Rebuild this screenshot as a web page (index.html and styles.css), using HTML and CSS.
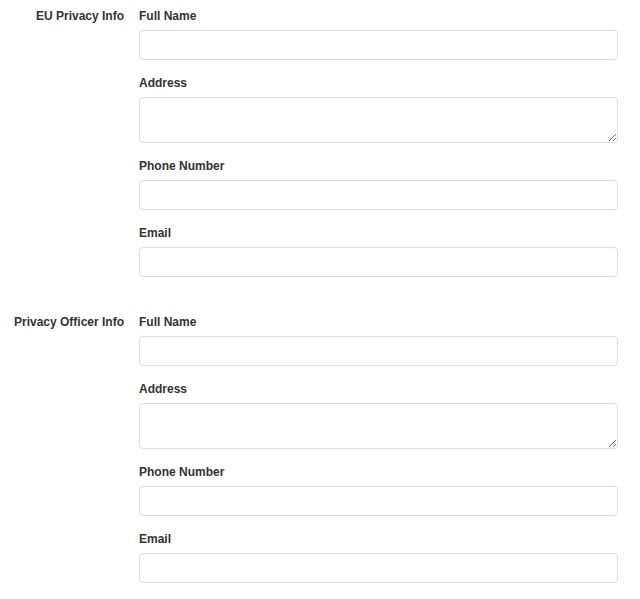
FILE: index.html
```html
<!DOCTYPE html>
<html>
<head>
<meta charset="utf-8">
<link rel="stylesheet" href="styles.css">
</head>
<body>
<form class="form">
  <section class="group">
    <div class="group-label">EU Privacy Info</div>
    <div class="fields">
      <div class="field">
        <label class="field-label">Full Name</label>
        <input class="control" type="text">
      </div>
      <div class="field">
        <label class="field-label">Address</label>
        <textarea class="control area"></textarea>
      </div>
      <div class="field">
        <label class="field-label">Phone Number</label>
        <input class="control" type="text">
      </div>
      <div class="field">
        <label class="field-label">Email</label>
        <input class="control" type="text">
      </div>
    </div>
  </section>
  <section class="group">
    <div class="group-label">Privacy Officer Info</div>
    <div class="fields">
      <div class="field">
        <label class="field-label">Full Name</label>
        <input class="control" type="text">
      </div>
      <div class="field">
        <label class="field-label">Address</label>
        <textarea class="control area"></textarea>
      </div>
      <div class="field">
        <label class="field-label">Phone Number</label>
        <input class="control" type="text">
      </div>
      <div class="field">
        <label class="field-label">Email</label>
        <input class="control" type="text">
      </div>
    </div>
  </section>
</form>
</body>
</html>
```
FILE: styles.css
```css
html, body {
  margin: 0;
  padding: 0;
  background: #fff;
}
body {
  font-family: "Liberation Sans", Arial, Helvetica, sans-serif;
  font-size: 12px;
  color: #333;
}
.form {
  padding-top: 5px;
  display: flex;
  flex-direction: column;
  gap: 34px;
}
.group {
  display: grid;
  grid-template-columns: 124px 479px;
  column-gap: 15px;
}
.group-label {
  text-align: right;
  font-weight: bold;
  line-height: 20px;
  padding-top: 1px;
}
.fields {
  display: flex;
  flex-direction: column;
  gap: 12px;
}
.field {
  display: flex;
  flex-direction: column;
}
.field-label {
  font-weight: bold;
  line-height: 20px;
  padding-top: 1px;
  margin-bottom: 4px;
}
.control {
  box-sizing: border-box;
  width: 479px;
  height: 30px;
  margin: 0;
  border: 1px solid #dedede;
  border-radius: 4px;
  background: #fff;
  font-family: inherit;
  font-size: 12px;
  padding: 4px 8px;
  outline: none;
}
.area {
  height: 46px;
  resize: vertical;
  display: block;
}
```
